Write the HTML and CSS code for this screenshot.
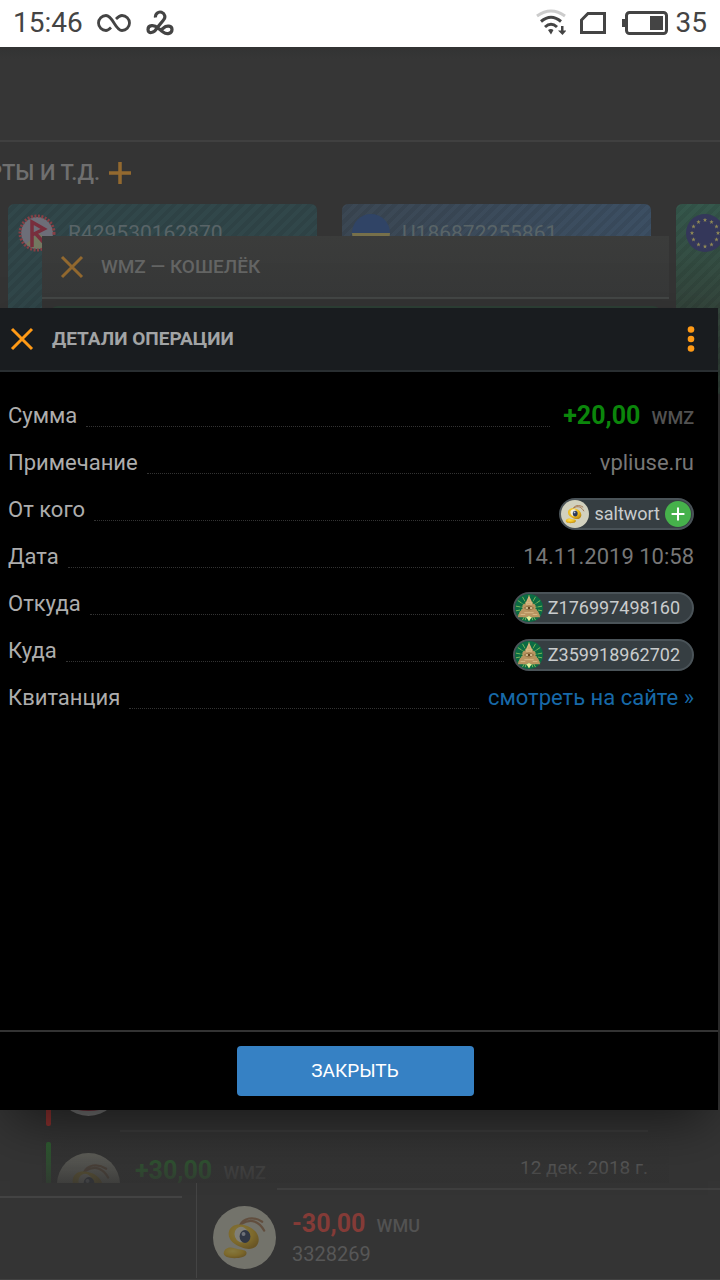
FILE: index.html
```html
<!DOCTYPE html>
<html lang="ru">
<head>
<meta charset="utf-8">
<meta name="viewport" content="width=device-width, initial-scale=1">
<title>Детали операции</title>
<link rel="stylesheet" href="styles.css">
</head>
<body>
<svg class="defs" aria-hidden="true">
  <defs>
    <radialGradient id="yellow" cx="40%" cy="35%" r="70%">
      <stop offset="0" stop-color="#ffe050"/><stop offset="0.6" stop-color="#eab820"/><stop offset="1" stop-color="#b8860f"/>
    </radialGradient>
    <symbol id="bug" viewBox="0 0 64 64">
      <circle cx="32" cy="32" r="32" fill="#d2d1be"/>
      <path d="M27 20C31 12 41 10 50 16M29 18C39 12 47 16 52 25" fill="none" stroke="#a6774f" stroke-width="2.2" stroke-linecap="round"/>
      <path d="M16 27c1-8 10-10 18-7 9 3 14 10 12 17-2 7-10 8-17 5-8-3-14-8-13-15z" fill="url(#yellow)"/>
      <path d="M11 47c1-5 7-6 11-4 5 2 11 1 12 4 1 5-7 6-12 6-7 0-12-2-11-6z" fill="url(#yellow)"/>
      <ellipse cx="29" cy="29" rx="7" ry="8" fill="#f2f0df" transform="rotate(-20 29 29)"/>
      <ellipse cx="32.500" cy="31" rx="5.500" ry="6.500" fill="#2c3a5c"/>
      <circle cx="31" cy="28.500" r="2" fill="#c4cce0"/>
    </symbol>
    <symbol id="pyramid" viewBox="0 0 30 30">
      <circle cx="15" cy="15" r="15" fill="#0b6b43"/>
      <path d="M15 1v28M3 7l24 16M27 7 3 23M8 3l14 25M22 3 8 28M1 13l28 5M29 13 1 18M11 28l1-4M19 28l-1-4" stroke="#8fc45c" stroke-width="0.9" stroke-dasharray="5 1"/>
      <path d="M15 2 19 10 22 12 22 16 25 19 27 25H18L15 23.500 12 25H3L5 19 8 16V12L11 10z" fill="#b99460"/>
      <path d="M15 3 18 11H12zM10 20h10M6 22h5M19 22h5M12 9h6" stroke="#d6b987" stroke-width="1" fill="#cba870"/>
      <path d="M10 15q5-4 10 0q-5 4-10 0z" fill="#dcc79a" stroke="#7d5a2c" stroke-width="0.800"/>
      <circle cx="15" cy="15" r="1.400" fill="#65451f"/>
      <path d="M12 25 15 23.500 18 25 15 29z" fill="#e8ee9b"/>
    </symbol>
    <symbol id="cross" viewBox="0 0 24 24">
      <path d="M2 2 22 22M22 2 2 22" fill="none" stroke="currentColor" stroke-width="3"/>
    </symbol>
    <symbol id="plus" viewBox="0 0 24 24">
      <path d="M12 1V23M1 12H23" fill="none" stroke="currentColor" stroke-width="3.500"/>
    </symbol>
    <symbol id="star" viewBox="-3 -3 6 6">
      <path d="M0-2.600.700-.8 2.600-.8 1.100.400 1.600 2.300 0 1.200-1.600 2.300-1.100.400-2.600-.8-.700-.8z" fill="#8e8856"/>
    </symbol>
  </defs>
</svg>
<div class="screen">
  <header class="status">
    <span>15:46</span>
    <svg class="ic-inf" viewBox="0 0 34 20"><path d="M14 14.500C11.500 17 10.500 17.500 9 17.500A7.500 7.500 0 0 1 9 2.500C16 2.500 18 17.500 25 17.500A7.500 7.500 0 0 0 25 2.500C22.500 2.500 21 4 19 6" fill="none" stroke="#444" stroke-width="2.800"/></svg>
    <svg class="ic-knot" viewBox="0 0 28 26"><path d="M9.500 7.500A4.700 4.700 0 1 1 17.500 10L11 18C8 23.500 2 24 2 19.500C2 14.500 8.500 14.500 12 18L17 22C21 25 26 23.500 26 19.500C26 15.500 20.500 15 17.500 18L13.500 21" fill="none" stroke="#444" stroke-width="3.200"/></svg>
    <span class="grow"></span>
    <svg class="ic-wifi" viewBox="0 0 30 28"><g fill="none" stroke-width="3"><path d="M1 7Q15-3 29 7" stroke="#ccc"/><path d="M5 12.500Q15 4 25 12.500M9 18Q15 12.500 21 18" stroke="#444"/></g><path d="M12 21Q15 19 17.500 21L15 25.500zM25 17h2.500v4.500H30.500L26.500 26 22 21.500H25z" fill="#444"/></svg>
    <svg class="ic-sim" viewBox="0 0 26 22"><path d="M8 1.500H24.500V20.500H1.500V8z" fill="none" stroke="#444" stroke-width="3"/></svg>
    <svg class="ic-bat" viewBox="0 0 46 24"><rect x="4.500" y="1.500" width="40" height="21" rx="3" fill="none" stroke="#444" stroke-width="3"/><path d="M0 8h4v8H0zM28 5h13v14H28z" fill="#444"/></svg>
    <span>35</span>
  </header>
  <main class="page">
    <div class="topbar"></div>
    <div class="section">
      <h2>РТЫ И Т.Д.</h2>
      <button class="add" aria-label="Добавить"><svg><use href="#plus"/></svg></button>
    </div>
    <div class="cards">
      <article class="card teal">
        <svg class="coin" viewBox="0 0 38 38"><circle cx="19" cy="19" r="16" fill="#6d6e78"/><path d="M20 19 8 30A16 16 0 0 0 33 27z" fill="#737860"/><circle cx="19" cy="19" r="17" fill="none" stroke="#883f45" stroke-width="3" stroke-dasharray="2 1.500"/><path d="M14 33V8L26 15 14 21M18 20 28 31" fill="none" stroke="#782e3d" stroke-width="3.500"/></svg>
        <span>R429530162870</span>
      </article>
      <article class="card blue">
        <svg class="coin" viewBox="0 0 38 38"><circle cx="19" cy="19" r="19" fill="#304466"/><path d="M0 19h38a19 19 0 0 1-38 0z" fill="#77704a"/></svg>
        <span>U186872255861</span>
      </article>
      <article class="card green">
        <svg class="coin" viewBox="0 0 38 38"><circle cx="19" cy="19" r="19" fill="#34375a"/><g>
          <use href="#star" x="16.500" y="3.500" width="5" height="5"/><use href="#star" x="23" y="5.500" width="5" height="5"/><use href="#star" x="28" y="10" width="5" height="5"/><use href="#star" x="29.500" y="16.500" width="5" height="5"/><use href="#star" x="28" y="23" width="5" height="5"/><use href="#star" x="23" y="28" width="5" height="5"/><use href="#star" x="16.500" y="30" width="5" height="5"/><use href="#star" x="10" y="28" width="5" height="5"/><use href="#star" x="5" y="23" width="5" height="5"/><use href="#star" x="3.500" y="16.500" width="5" height="5"/><use href="#star" x="5" y="10" width="5" height="5"/><use href="#star" x="10" y="5.500" width="5" height="5"/></g></svg>
      </article>
    </div>
    <div class="history">
      <div class="col-left"></div>
      <div class="col-right">
        <div class="entry">
          <svg class="avatar"><use href="#bug"/></svg>
          <div>
            <p class="sum minus">-30,00 <small>WMU</small></p>
            <p class="note">3328269</p>
          </div>
        </div>
      </div>
    </div>
  </main>

  <section class="wallet">
    <header class="wallet-head">
      <button class="close dim" aria-label="Закрыть кошелёк"><svg><use href="#cross"/></svg></button>
      <h2>WMZ — КОШЕЛЁК</h2>
    </header>
    <div class="wallet-body"><div class="wallet-card"></div></div>
    <div class="op out">
      <svg class="avatar" viewBox="0 0 64 64"><circle cx="32" cy="32" r="32" fill="#ccc"/><path d="M3 30h58v14q-5 15-29 15T3 44z" fill="#b3203a"/></svg>
    </div>
    <div class="op in">
      <svg class="avatar"><use href="#bug"/></svg>
      <p class="sum plus">+30,00 <small>WMZ</small></p>
      <time>12 дек. 2018 г.</time>
    </div>
  </section>

  <section class="details" role="dialog" aria-labelledby="title">
    <header class="details-head">
      <button class="close" aria-label="Закрыть окно"><svg><use href="#cross"/></svg></button>
      <h1 id="title">ДЕТАЛИ ОПЕРАЦИИ</h1>
      <button class="more" aria-label="Меню"><svg viewBox="0 0 8 26"><g fill="#ff9a16"><circle cx="4" cy="3.500" r="3.300"/><circle cx="4" cy="13" r="3.300"/><circle cx="4" cy="22.500" r="3.300"/></g></svg></button>
    </header>
    <dl class="fields">
      <div class="field"><dt>Сумма</dt><i></i><dd class="sum amount">+20,00 <small>WMZ</small></dd></div>
      <div class="field"><dt>Примечание</dt><i></i><dd>vpliuse.ru</dd></div>
      <div class="field"><dt>От кого</dt><i></i><dd class="pill user"><svg class="face"><use href="#bug"/></svg>saltwort<button class="contact" aria-label="Добавить контакт"><svg><use href="#plus"/></svg></button></dd></div>
      <div class="field"><dt>Дата</dt><i></i><dd>14.11.2019 10:58</dd></div>
      <div class="field"><dt>Откуда</dt><i></i><dd class="pill"><svg class="face"><use href="#pyramid"/></svg>Z176997498160</dd></div>
      <div class="field"><dt>Куда</dt><i></i><dd class="pill"><svg class="face"><use href="#pyramid"/></svg>Z359918962702</dd></div>
      <div class="field"><dt>Квитанция</dt><i></i><dd><a href="#receipt">смотреть на сайте »</a></dd></div>
    </dl>
    <footer class="details-foot"><button class="primary">ЗАКРЫТЬ</button></footer>
  </section>
</div>
</body>
</html>
```
FILE: styles.css
```css
* { box-sizing: border-box; }
body { margin: 0; background: #343434; font-family: Roboto, "Noto Sans", sans-serif; font-size: 22px; line-height: 26px; }
h1, h2, p, dl, dd { margin: 0; }
h1, h2 { font-weight: 500; }
button { border: 0; padding: 0; background: none; color: inherit; font: inherit; display: flex; align-items: center; justify-content: center; }
svg { display: block; flex: none; }
.defs { position: absolute; width: 0; height: 0; }
.screen { position: relative; min-height: 100vh; display: flex; flex-direction: column; overflow: hidden; }

/* status bar */
.status { display: flex; align-items: center; height: 47px; padding: 0 13px 2px; background: #fff; color: #444; font-size: 28px; }
.grow { flex: 1; }
.ic-inf { width: 34px; height: 20px; margin-left: 14px; }
.ic-knot { width: 28px; height: 26px; margin-left: 15px; }
.ic-wifi { width: 30px; height: 28px; margin-right: 14px; }
.ic-sim { width: 26px; height: 22px; margin-right: 16px; }
.ic-bat { width: 46px; height: 24px; margin-right: 8px; }

/* dimmed page */
.page { flex: 1; display: flex; flex-direction: column; }
.topbar { height: 95px; border-bottom: 2px solid #404040; background: linear-gradient(#323333, #363636 12px); }
.section { display: flex; align-items: center; gap: 8px; height: 62px; }
.section h2 { width: 100px; display: flex; justify-content: flex-end; white-space: nowrap; overflow: hidden; font-size: 22px; color: #6f6f6f; }
.add { color: #93692f; }
.add svg { width: 24px; height: 24px; }
.cards { display: flex; gap: 25px; padding-left: 8px; overflow: hidden; }
.card { flex: 0 0 43.4%; height: 190px; padding: 10px; border-radius: 6px; display: flex; align-items: flex-start; gap: 12px; font-size: 21px; line-height: 38px; color: #596467; }
.teal { background: repeating-linear-gradient(135deg, #0000 0 4px, #00000012 4px 8px), #31474a; }
.blue { background: repeating-linear-gradient(135deg, #0000 0 4px, #00000012 4px 8px), linear-gradient(90deg, #3b4753, #3c4f63); }
.green { background: repeating-linear-gradient(135deg, #0000 0 4px, #00000012 4px 8px), linear-gradient(#35584c, #34443b 110px); }
.coin { width: 38px; height: 38px; }
.history { margin-top: auto; display: flex; height: 98px; padding-bottom: 1px; border-bottom: 1px solid #414141; }
.col-left { width: 197px; border-right: 1px solid #444; padding: 14px 14px 0 0; }
.col-left::before { content: ""; display: block; height: 2px; background: #434343; }
.col-right { flex: 1; padding-top: 6px; }
.col-right::before { content: ""; display: block; height: 2px; margin-left: 80px; background: #3f3f3f; }
.entry { display: flex; align-items: center; gap: 16px; padding: 16px 16px 0; }
.avatar { width: 63px; height: 63px; opacity: .4; }
.sum { font-size: 25px; font-weight: 700; line-height: 30px; }
.sum small { font-size: 18px; font-weight: 500; margin-left: 5px; color: #525252; }
.minus { color: #843b37; }
.note { font-size: 20px; color: #575757; }

/* wallet window */
.wallet { position: absolute; top: 236px; bottom: 97px; left: 42px; right: 51px; background: #343434; display: flex; flex-direction: column; overflow: hidden; }
.wallet-head { flex: none; display: flex; align-items: center; gap: 17px; height: 63px; padding: 0 18px; border-bottom: 2px solid #444746; background: linear-gradient(#3b3c3b, #373838); color: #646564; }
.wallet-head h2 { font-size: 19px; }
.close { color: #ff9a16; }
.close svg { width: 24px; height: 24px; }
.dim { color: #93692f; }
.wallet-body { flex: 1; padding: 7px 8px; }
.wallet-card { height: 120px; border-radius: 8px; background: #2d4036; }
.op { position: relative; flex: none; display: flex; gap: 15px; padding: 20px 21px 0 15px; }
.op::before { content: ""; position: absolute; left: 4px; top: 9px; width: 5px; height: 84px; border-radius: 2px; }
.out { height: 100px; }
.out::after { content: ""; position: absolute; left: 78px; right: 21px; bottom: 1px; height: 2px; background: #3b3b3b; }
.out::before { background: #8a302e; }
.in { height: 50px; overflow: hidden; }
.in::before { background: #2d6430; }
.in::after { content: ""; position: absolute; inset: 0; background: linear-gradient(#3030300a, #323232cc); }
.op .plus { margin-top: 3px; color: #2d6c30; }
.op time { margin: 2px 0 0 auto; font-size: 19px; color: #777; }

/* operation details */
.details { position: absolute; top: 308px; bottom: 170px; left: 0; right: 2px; display: flex; flex-direction: column; background: #000; box-shadow: 0 20px 50px -10px #0008; }
.details-head { flex: none; display: flex; align-items: center; height: 64px; padding: 0 23px 0 10px; border-bottom: 2px solid #292e31; background: #191c1f; color: #a2a4a5; }
.details-head h1 { flex: 1; margin-left: 18px; font-size: 19px; font-weight: 700; }
.more svg { width: 8px; height: 26px; }
.fields { flex: 1; padding: 20px 24px 0 8px; }
.field { display: flex; align-items: center; gap: 9px; height: 47px; }
.field dt { color: #adadad; }
.field i { flex: 1; height: 22px; border-bottom: 1px dotted #333; }
.field dd { color: #777; }
.field .amount { padding: 2px 0 0 4px; color: #0b860b; }
.field .pill { display: flex; align-items: center; height: 32px; margin-top: 8px; padding-right: 12px; border: 2px solid #4a5358; border-radius: 16px; background: #363e42; color: #c9cccd; font-size: 18px; }
.face { width: 28px; height: 28px; margin-right: 5px; }
.field .user { padding-right: 1px; }
.contact { width: 26px; height: 26px; margin-left: 5px; border-radius: 50%; background: #46b14b; color: #fff; }
.contact svg { width: 14px; height: 14px; }
.field a { color: #1769a8; text-decoration: none; }
.details-foot { flex: none; display: flex; justify-content: center; padding: 14px 8px 14px 0; border-top: 2px solid #333; }
.primary { width: 237px; height: 50px; border-radius: 4px; background: #3681c4; color: #fff; font-size: 19px; }
```
